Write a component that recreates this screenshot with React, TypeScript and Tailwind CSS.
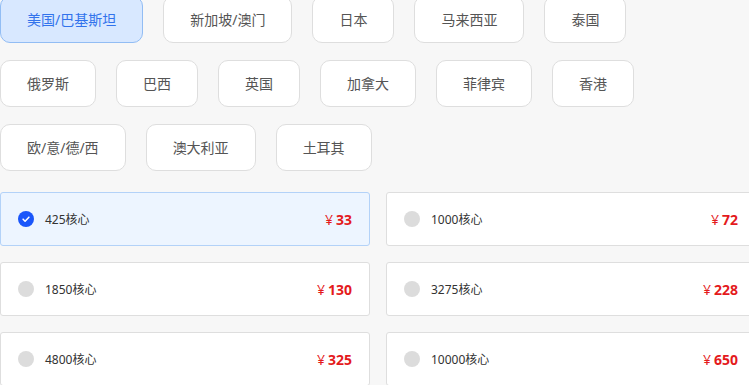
import { useState } from "react";

const ROWS = [
  ["美国/巴基斯坦", "新加坡/澳门", "日本", "马来西亚", "泰国"],
  ["俄罗斯", "巴西", "英国", "加拿大", "菲律宾", "香港"],
  ["欧/意/德/西", "澳大利亚", "土耳其"],
];

const PLANS = [
  { cores: 425, price: 33 },
  { cores: 1000, price: 72 },
  { cores: 1850, price: 130 },
  { cores: 3275, price: 228 },
  { cores: 4800, price: 325 },
  { cores: 10000, price: 650 },
];

export default function App() {
  const [region, setRegion] = useState("美国/巴基斯坦");
  const [plan, setPlan] = useState(425);

  return (
    <div
      className="w-[749px] h-[385px] overflow-hidden bg-[#f7f7f7]"
      style={{ fontFamily: '"Noto Sans", "Noto Sans CJK SC", sans-serif' }}
    >
      <div className="w-[756px] -mt-[4px]">
        <div className="flex flex-col gap-[17px]">
          {ROWS.map((row, i) => (
            <div key={i} className="flex gap-[20px]">
              {row.map((name) => {
                const active = name === region;
                return (
                  <button
                    key={name}
                    type="button"
                    onClick={() => setRegion(name)}
                    className={`h-[47px] px-[26px] rounded-[10px] border text-[14px] leading-none cursor-pointer ${
                      active
                        ? "bg-[#d8e8ff] border-[#92bdf4] text-[#3273ec]"
                        : "bg-white border-[#dedede] text-[#555]"
                    }`}
                  >
                    {name}
                  </button>
                );
              })}
            </div>
          ))}
        </div>

        <div className="grid grid-cols-2 gap-x-[16px] gap-y-[16px] mt-[21px]">
          {PLANS.map((p) => {
            const active = p.cores === plan;
            return (
              <div
                key={p.cores}
                onClick={() => setPlan(p.cores)}
                className={`h-[54px] flex items-center pl-[17px] pr-[17px] rounded-[3px] border cursor-pointer ${
                  active ? "bg-[#edf5ff] border-[#b3d2f8]" : "bg-white border-[#dedede]"
                }`}
              >
                {active ? (
                  <span className="w-[16px] h-[16px] rounded-full bg-[#1a56fa] flex items-center justify-center">
                    <svg width="10" height="10" viewBox="0 0 12 12" fill="none" stroke="white" strokeWidth="1.8" strokeLinecap="round" strokeLinejoin="round">
                      <path d="M2.5 6.2l2.4 2.4 4.6-4.8" />
                    </svg>
                  </span>
                ) : (
                  <span className="w-[16px] h-[16px] rounded-full bg-[#dcdcdc]" />
                )}
                <span className="ml-[11px] mt-[2px] text-[12px] text-[#333]">{p.cores}核心</span>
                <span className="ml-auto flex items-baseline text-[#e41a1c]">
                  <span className="text-[14px] mr-[3px]">¥</span>
                  <span className="text-[14px] font-bold">{p.price}</span>
                </span>
              </div>
            );
          })}
        </div>
      </div>
    </div>
  );
}
